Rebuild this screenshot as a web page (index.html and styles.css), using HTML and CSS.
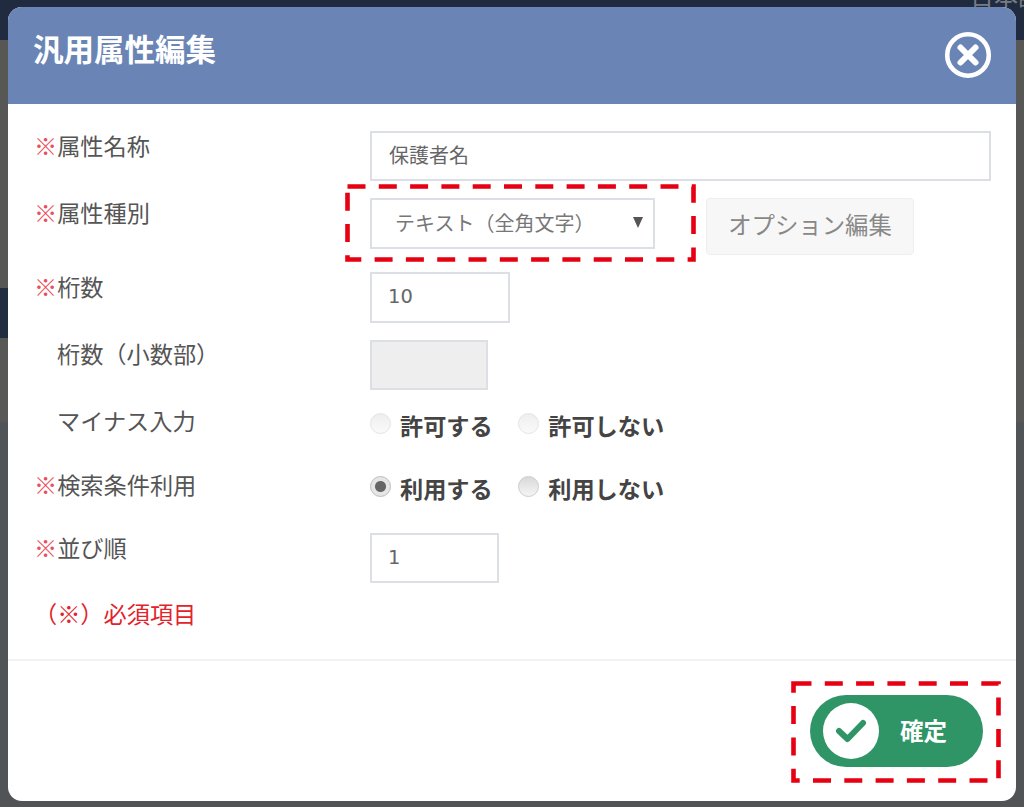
FILE: index.html
```html
<!DOCTYPE html>
<html lang="ja">
<head>
<meta charset="utf-8">
<title>汎用属性編集</title>
<link rel="stylesheet" href="styles.css">
</head>
<body>
<div class="backdrop">
  <div class="band-top"><span class="lang">日本語</span></div>
  <div class="band-a"></div>
  <div class="band-dark"></div>
  <div class="band-b"></div>
  <div class="band-c"></div>
</div>
<div class="modal">
  <header class="modal-head">
    <h1 class="modal-title">汎用属性編集</h1>
    <svg class="close-icon" width="48" height="48" viewBox="0 0 48 48">
      <circle cx="24" cy="24" r="20.8" fill="none" stroke="#fff" stroke-width="4.6"/>
      <path d="M16.5 16.5 L31.5 31.5 M31.5 16.5 L16.5 31.5" fill="none" stroke="#fff" stroke-width="6" stroke-linecap="round"/>
    </svg>
  </header>
  <main class="form">
    <div class="row r1">
      <div class="label"><span class="req">※</span>属性名称</div>
      <div class="field w-full">保護者名</div>
    </div>
    <div class="row r2">
      <div class="label"><span class="req">※</span>属性種別</div>
      <div class="field select"><span>テキスト（全角文字）</span><span class="arrow"></span></div>
      <div class="opt-btn">オプション編集</div>
    </div>
    <div class="row r3">
      <div class="label"><span class="req">※</span>桁数</div>
      <div class="field num w-139">10</div>
    </div>
    <div class="row r4">
      <div class="label indent">桁数（小数部）</div>
      <div class="field disabled"></div>
    </div>
    <div class="row r5">
      <div class="label indent">マイナス入力</div>
      <div class="radios">
        <span class="radio off"></span><span class="radio-text gap-a">許可する</span>
        <span class="radio off"></span><span class="radio-text">許可しない</span>
      </div>
    </div>
    <div class="row r6">
      <div class="label"><span class="req">※</span>検索条件利用</div>
      <div class="radios">
        <span class="radio on"></span><span class="radio-text gap-a">利用する</span>
        <span class="radio"></span><span class="radio-text">利用しない</span>
      </div>
    </div>
    <div class="row r7">
      <div class="label"><span class="req">※</span>並び順</div>
      <div class="field num w-129">1</div>
    </div>
    <p class="note">（※）必須項目</p>
  </main>
  <footer class="modal-foot">
    <div class="confirm">
      <span class="confirm-disc">
        <svg width="32" height="26" viewBox="0 0 32 26"><path d="M4 13 L12.5 21 L28 5" fill="none" stroke="#2f9566" stroke-width="6" stroke-linecap="round" stroke-linejoin="round"/></svg>
      </span>
      <span class="confirm-text">確定</span>
    </div>
  </footer>
  <svg class="hl hl-select" width="354" height="81" viewBox="0 0 354 81"><rect x="2.5" y="2.5" width="346" height="73" fill="none" stroke="#e60012" stroke-width="4.6" stroke-dasharray="18 13.3"/></svg>
  <svg class="hl hl-confirm" width="212" height="103" viewBox="0 0 212 103"><rect x="2.5" y="2.5" width="205" height="97" fill="none" stroke="#e60012" stroke-width="4.6" stroke-dasharray="18 13.3"/></svg>
</div>
</body>
</html>
```

FILE: styles.css
```css
html, body {
  margin: 0;
  padding: 0;
  width: 1024px;
  height: 807px;
  overflow: hidden;
  background: #515457;
  font-family: "Noto Sans CJK JP", "Noto Sans", sans-serif;
}

.backdrop {
  display: flex;
  flex-direction: column;
  width: 1024px;
  height: 807px;
}
.band-top {
  height: 40px;
  background: #202b3f;
  display: flex;
  justify-content: flex-end;
  overflow: hidden;
}
.lang {
  font-size: 24px;
  line-height: 24px;
  margin-top: -17px;
  margin-right: -18px;
  color: #777c84;
}
.band-a { height: 248px; background: #575756; }
.band-dark {
  height: 50px;
  width: 100%;
  background: linear-gradient(to right, #222d40 0, #222d40 512px, #575756 512px);
}
.band-b { height: 84px; background: #585857; }
.band-c { flex: 1; background: #515457; }

.modal {
  position: absolute;
  left: 8px;
  top: 7px;
  width: 1008px;
  height: 794px;
  background: #fff;
  border-radius: 14px;
  overflow: hidden;
  display: flex;
  flex-direction: column;
}
.modal-head {
  height: 97px;
  flex: none;
  background: #6a85b5;
  display: flex;
  justify-content: space-between;
  align-items: flex-start;
  padding: 0 24px 0 25px;
}
.modal-title {
  margin: 21px 0 0;
  font-size: 30.5px;
  line-height: 40px;
  font-weight: 700;
  color: #fff;
}
.close-icon { margin-top: 24px; }

.form {
  flex: 1;
  padding: 27px 25px 0 26px;
}
.row {
  display: flex;
  align-items: flex-start;
}
.r1 { height: 50px; }
.r2 { margin-top: 17px; height: 51px; }
.r3 { margin-top: 23px; height: 51px; }
.r4 { margin-top: 17px; height: 50px; }
.r5 { margin-top: 17px; height: 36px; }
.r6 { margin-top: 27px; height: 36px; }
.r7 { margin-top: 27px; height: 50px; }

.label {
  width: 336px;
  flex: none;
  font-size: 23.2px;
  line-height: 32px;
  color: #555;
  margin-top: -2px;
}
.indent { padding-left: 23px; width: 313px; }
.r4 .label, .r5 .label { margin-top: -3px; }
.req { color: #e8505b; }

.field {
  box-sizing: border-box;
  height: 100%;
  border: 2px solid #dcdfe4;
  background: #fff;
  color: #666;
  font-size: 20px;
  line-height: 44px;
  padding-left: 17px;
}
.w-full { width: 622px; }
.w-139 { width: 140px; }
.w-129 { width: 129px; }
.num {
  font-family: "DejaVu Sans", sans-serif;
  font-size: 19.5px;
  line-height: 46px;
  padding-left: 16px;
}
.disabled {
  width: 118px;
  background: #eee;
}
.select {
  width: 285px;
  display: flex;
  justify-content: space-between;
  align-items: center;
  padding: 0 10px 2px 23px;
  font-size: 20px;
  color: #777;
}
.arrow {
  width: 0;
  height: 0;
  border-left: 5.5px solid transparent;
  border-right: 5.5px solid transparent;
  border-top: 11px solid #555;
}
.opt-btn {
  box-sizing: border-box;
  margin-left: 51px;
  width: 208px;
  height: 57px;
  background: #f7f7f7;
  border: 1px solid #eee;
  border-radius: 4px;
  color: #888;
  font-size: 23.4px;
  line-height: 50px;
  text-align: center;
}

.radios {
  display: flex;
  align-items: center;
  height: 36px;
}
.radio {
  box-sizing: border-box;
  flex: none;
  width: 21px;
  height: 21px;
  border-radius: 50%;
  border: 1px solid #ccc;
  background: linear-gradient(#d9d9d9, #f5f5f5);
  margin-right: 9px;
  margin-top: -3px;
}
.radio.off {
  border-color: #e4e4e4;
  background: linear-gradient(#eeeeee, #fafafa);
}
.radio.on {
  background: radial-gradient(circle, #666 0, #666 5px, #e6e6e6 6px);
  border-color: #bbb;
}
.radio-text {
  font-size: 23.2px;
  font-weight: 700;
  line-height: 36px;
  color: #444;
}
.gap-a { margin-right: 25.5px; }

.note {
  margin: 14px 0 0 0;
  font-size: 23.2px;
  line-height: 32px;
  color: #e2232b;
}

.modal-foot {
  flex: none;
  height: 142px;
  box-sizing: border-box;
  border-top: 2px solid #f3f3f3;
  display: flex;
  justify-content: flex-end;
  align-items: flex-start;
  padding: 34px 33px 0 0;
}
.confirm {
  width: 173px;
  height: 72px;
  background: #2f9566;
  border-radius: 36px;
  display: flex;
  align-items: center;
  box-sizing: border-box;
  padding-left: 13px;
}
.confirm-disc {
  width: 56px;
  height: 56px;
  border-radius: 50%;
  background: #fff;
  display: flex;
  align-items: center;
  justify-content: center;
}
.confirm-text {
  margin-left: 21px;
  padding-bottom: 2px;
  color: #fff;
  font-size: 23.5px;
  font-weight: 700;
}

.hl { position: absolute; }
.hl-select { left: 337px; top: 177px; }
.hl-confirm { left: 783px; top: 674px; }
```
